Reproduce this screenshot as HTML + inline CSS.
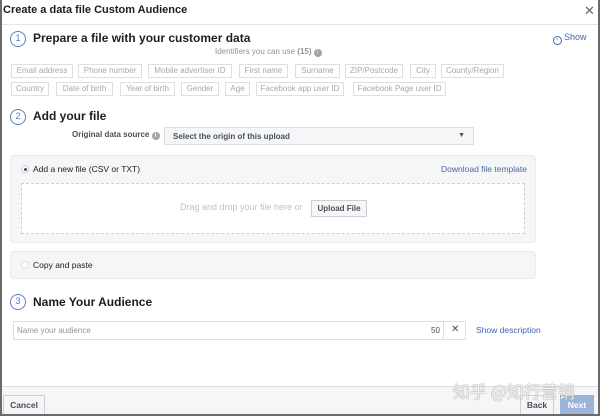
<!DOCTYPE html>
<html><head><meta charset="utf-8"><style>
*{box-sizing:border-box;margin:0;padding:0}
body{width:600px;height:416px;overflow:hidden;background:#fff;font-family:"Liberation Sans",Arial,sans-serif;position:relative;color:#1c1e21}
.a{position:absolute;white-space:nowrap}
.frame{position:absolute;left:0;top:0;width:600px;height:416px;border-left:2px solid #6b6b6b;border-right:2px solid #6b6b6b;border-bottom:2px solid #6b6b6b;pointer-events:none}
.circ{position:absolute;width:16px;height:16px;border:1.5px solid #5b7fbf;border-radius:50%;font-size:9px;color:#5b7fbf;text-align:center;line-height:13px}
.h{font-size:12px;font-weight:bold;color:#1c1e21}
.tag{position:absolute;height:14px;border:1px solid #dddfe2;font-size:8px;color:#a5a8ad;line-height:12px;text-align:center}
.panel{position:absolute;background:#f5f6f7;border:1px solid #e9ebee;border-radius:4px}
</style></head><body>
<div class="a" style="left:3px;top:4px;font-size:11px;font-weight:bold">Create a data file Custom Audience</div>
<div class="a" style="left:584px;top:3px;font-size:13px;color:#606770">✕</div>
<div class="a" style="left:2px;top:24px;width:596px;height:1px;background:#e5e5e5"></div>

<div class="circ" style="left:10px;top:31px">1</div>
<div class="a h" style="left:33px;top:31px">Prepare a file with your customer data</div>
<div class="a" style="left:553px;top:32px;font-size:9px;color:#4267b2"><span style="display:inline-block;width:9px;height:9px;border:1px solid #4267b2;border-radius:50%;font-size:6px;line-height:7px;text-align:center;vertical-align:-1px;margin-right:2px">‹</span>Show</div>
<div class="a" style="left:215px;top:47px;font-size:8px;color:#8d949e">Identifiers you can use <b>(15)</b> <span style="display:inline-block;width:8px;height:8px;border-radius:50%;background:#a0a4aa;color:#fff;font-size:6px;text-align:center;line-height:8px">i</span></div>
<div class="tag" style="left:11px;top:64px;width:62px">Email address</div>
<div class="tag" style="left:78px;top:64px;width:64px">Phone number</div>
<div class="tag" style="left:148px;top:64px;width:84px">Mobile advertiser ID</div>
<div class="tag" style="left:239px;top:64px;width:49px">First name</div>
<div class="tag" style="left:295px;top:64px;width:45px">Surname</div>
<div class="tag" style="left:345px;top:64px;width:58px">ZIP/Postcode</div>
<div class="tag" style="left:410px;top:64px;width:26px">City</div>
<div class="tag" style="left:441px;top:64px;width:63px">County/Region</div>
<div class="tag" style="left:11px;top:82px;width:38px">Country</div>
<div class="tag" style="left:56px;top:82px;width:57px">Date of birth</div>
<div class="tag" style="left:120px;top:82px;width:55px">Year of birth</div>
<div class="tag" style="left:181px;top:82px;width:38px">Gender</div>
<div class="tag" style="left:225px;top:82px;width:25px">Age</div>
<div class="tag" style="left:256px;top:82px;width:88px">Facebook app user ID</div>
<div class="tag" style="left:353px;top:82px;width:93px">Facebook Page user ID</div>

<div class="circ" style="left:10px;top:109px">2</div>
<div class="a h" style="left:33px;top:109px">Add your file</div>
<div class="a" style="left:72px;top:130px;font-size:8px;font-weight:bold;color:#4b4f56">Original data source <span style="display:inline-block;width:8px;height:8px;border-radius:50%;background:#a0a4aa;color:#fff;font-size:6px;text-align:center;line-height:8px">i</span></div>
<div class="a" style="left:164px;top:127px;width:310px;height:18px;background:#f5f6f7;border:1px solid #dddfe2;font-size:8px;font-weight:bold;color:#4b4f56;padding:4px 8px">Select the origin of this upload<span style="position:absolute;right:8px;top:4px;font-size:7px">▼</span></div>

<div class="panel" style="left:10px;top:155px;width:526px;height:88px"></div>
<div class="a" style="left:21px;top:165px;width:8px;height:8px;border-radius:50%;background:#fff;border:1px solid #ccd0d5"><div style="width:3px;height:3px;background:#4b4f56;border-radius:50%;margin:1.5px"></div></div>
<div class="a" style="left:33px;top:164px;font-size:8.5px;color:#1c1e21">Add a new file (CSV or TXT)</div>
<div class="a" style="left:441px;top:164px;font-size:8.5px;color:#4b6a9c">Download file template</div>
<div class="a" style="left:21px;top:183px;width:504px;height:51px;border:1px dashed #ccd0d5;background:#fff"></div>
<div class="a" style="left:180px;top:202px;font-size:9px;color:#bec3c9">Drag and drop your file here or</div>
<div class="a" style="left:311px;top:200px;width:56px;height:17px;border:1px solid #ccd0d5;background:#f5f6f7;font-size:8px;font-weight:bold;color:#4b4f56;text-align:center;line-height:15px">Upload File</div>

<div class="panel" style="left:10px;top:251px;width:526px;height:28px"></div>
<div class="a" style="left:21px;top:261px;width:8px;height:8px;border-radius:50%;background:#fff;border:1px solid #dddfe2"></div>
<div class="a" style="left:33px;top:260px;font-size:8.5px">Copy and paste</div>

<div class="circ" style="left:10px;top:294px">3</div>
<div class="a h" style="left:33px;top:295px">Name Your Audience</div>
<div class="a" style="left:13px;top:321px;width:453px;height:19px;border:1px solid #dddfe2"></div>
<div class="a" style="left:17px;top:326px;font-size:8px;color:#90949c">Name your audience</div>
<div class="a" style="left:431px;top:326px;font-size:8px;color:#4b4f56">50</div>
<div class="a" style="left:443px;top:322px;width:1px;height:17px;background:#dddfe2"></div>
<div class="a" style="left:451px;top:324px;font-size:10px;color:#4b4f56">✕</div>
<div class="a" style="left:476px;top:325px;font-size:8.5px;color:#4267b2">Show description</div>

<div class="a" style="left:2px;top:386px;width:596px;height:30px;background:#f5f6f7;border-top:1px solid #dddfe2"></div>
<div class="a" style="left:3px;top:395px;width:42px;height:20px;border:1px solid #ccd0d5;background:#f5f6f7;font-size:8.5px;font-weight:bold;color:#4b4f56;text-align:center;line-height:18px">Cancel</div>
<div class="a" style="left:520px;top:395px;width:34px;height:20px;border:1px solid #ccd0d5;background:#f5f6f7;font-size:8.5px;font-weight:bold;color:#4b4f56;text-align:center;line-height:18px">Back</div>
<div class="a" style="left:560px;top:395px;width:34px;height:20px;background:#9cb4d8;font-size:8.5px;font-weight:bold;color:#fff;text-align:center;line-height:20px">Next</div>
<div class="a" style="left:453px;top:378px;font-size:17px;color:rgba(255,255,255,0.85);text-shadow:0 0 1px #999,0 0 1px #999;font-family:'Noto Sans CJK SC',sans-serif">知乎 @知行营销</div>
<div class="frame"></div>
</body></html>
